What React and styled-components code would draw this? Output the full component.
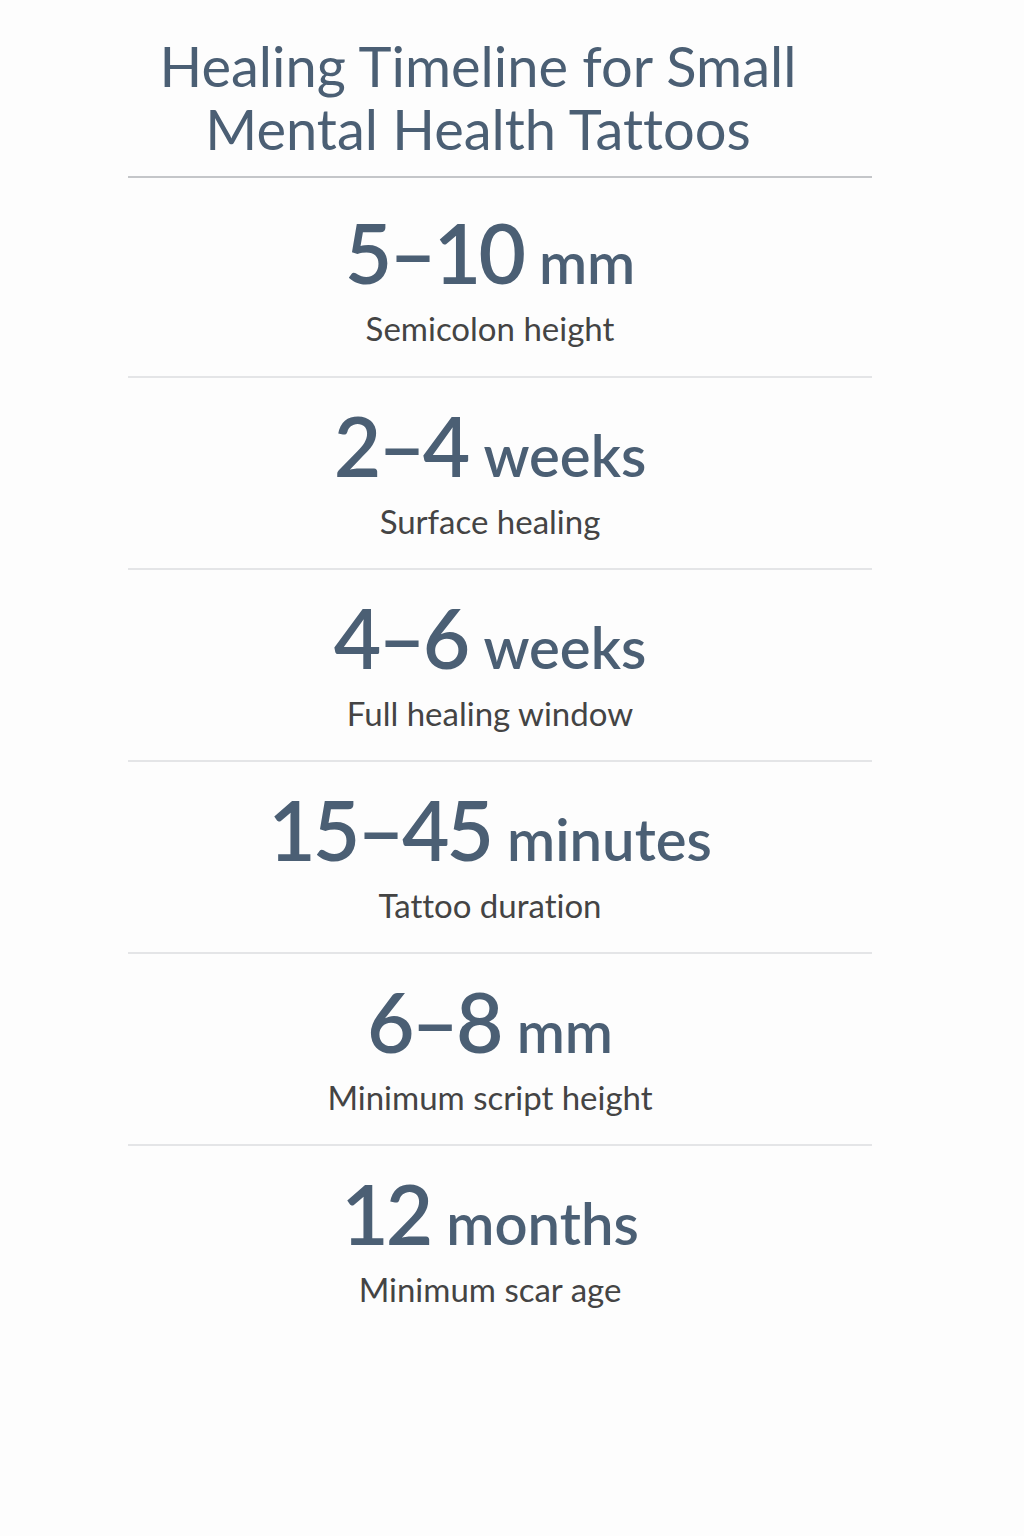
import styled, { createGlobalStyle } from "styled-components"

const GlobalStyle = createGlobalStyle`
  body {
    margin: 0;
    background: #fdfdfd;
    font-family: Lato, "Noto Sans", sans-serif;
    font-variant-ligatures: none;
  }
`

const Page = styled.div`
  width: 744px;
  margin: 0 0 0 128px;
  padding-top: 34px;
  min-height: 1536px;
  box-sizing: border-box;
`
const Title = styled.h1`
  margin: 0;
  padding: 0 44px 16px 0;
  font-size: 56px;
  line-height: 63px;
  font-weight: 400;
  color: #4b5f74;
  text-align: center;
  border-bottom: 2px solid #c4c6c9;
`
const Stat = styled.div`
  display: flex;
  flex-direction: column;
  align-items: center;
  padding: 22px 20px 25px 0;
  border-bottom: 2px solid #e4e5e7;
  &:first-of-type {
    padding-top: 29px;
    padding-bottom: 26px;
  }
  &:last-child {
    border-bottom: none;
  }
`
const Value = styled.div`
  color: #4b5f74;
  line-height: 90px;
  height: 90px;
  white-space: nowrap;
`
const Number = styled.span`
  font-size: 82px;
  font-weight: 600;
  letter-spacing: -3px;
  margin-right: 16px;
`
const Unit = styled.span`
  font-size: 58px;
  font-weight: 600;
  line-height: 1;
`
const Label = styled.div`
  margin-top: 9px;
  font-size: 33px;
  line-height: 44px;
  color: #444;
`

const stats = [
  { num: "5–10", unit: "mm", label: "Semicolon height" },
  { num: "2–4", unit: "weeks", label: "Surface healing" },
  { num: "4–6", unit: "weeks", label: "Full healing window" },
  { num: "15–45", unit: "minutes", label: "Tattoo duration" },
  { num: "6–8", unit: "mm", label: "Minimum script height" },
  { num: "12", unit: "months", label: "Minimum scar age" },
]

const App = () => {
  return (
    <Page>
      <GlobalStyle />
      <Title>Healing Timeline for Small Mental Health Tattoos</Title>
      {stats.map((s) => (
        <Stat key={s.label}>
          <Value>
            <Number>{s.num}</Number>
            <Unit>{s.unit}</Unit>
          </Value>
          <Label>{s.label}</Label>
        </Stat>
      ))}
    </Page>
  )
}

export default App
